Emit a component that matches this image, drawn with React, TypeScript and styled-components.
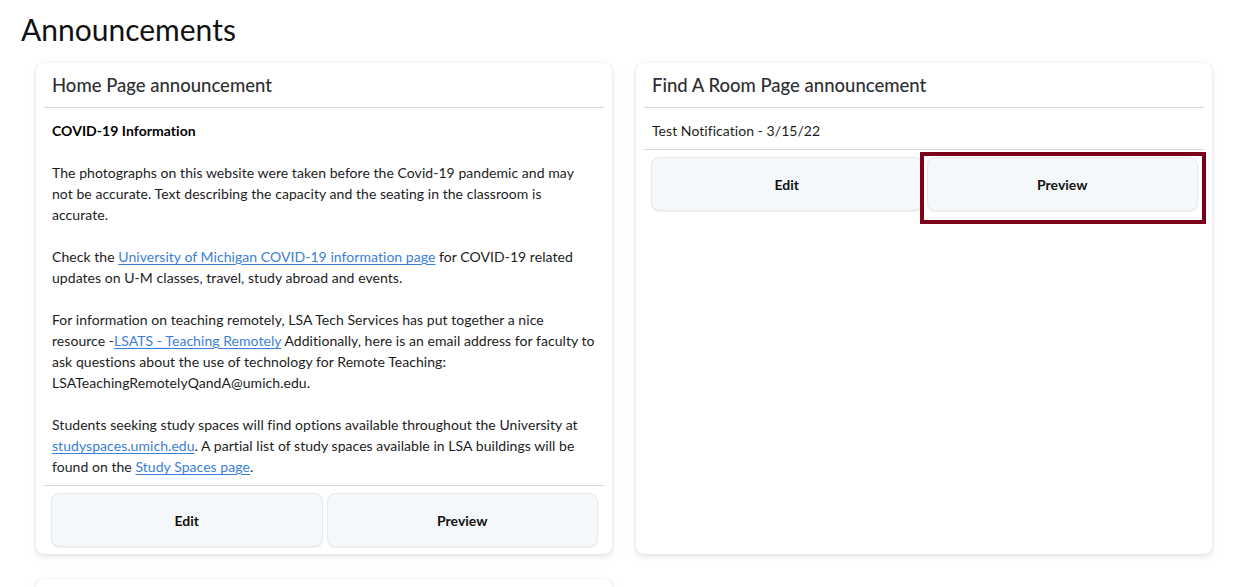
import React from "react";
import styled, { createGlobalStyle, css } from "styled-components";

const GlobalStyle = createGlobalStyle`
  html, body { margin: 0; padding: 0; background: #ffffff; }
  body {
    font-family: "Lato", "Liberation Sans", sans-serif;
    color: #1c1c1c;
    -webkit-font-smoothing: antialiased;
  }
`;

const Page = styled.main`
  padding: 0 20px 0 20px;
`;

const Title = styled.h1`
  margin: 11px 0 16px 1px;
  font-size: 30px;
  line-height: 36px;
  font-weight: 400;
  color: #111111;
`;

const CardGrid = styled.div`
  display: grid;
  grid-template-columns: 576px 576px;
  column-gap: 24px;
  row-gap: 25px;
  padding-left: 16px;
  align-items: stretch;
`;

const Card = styled.section<{ $empty?: boolean }>`
  display: flex;
  flex-direction: column;
  background: #ffffff;
  border-radius: 8px;
  box-shadow: 0 2px 6px rgba(0, 0, 0, 0.13), 0 0 2px rgba(0, 0, 0, 0.05);
  padding: 0 8px;
  ${(p) =>
    p.$empty &&
    css`
      min-height: 120px;
    `}
`;

const CardHeader = styled.h2`
  margin: 0;
  height: 44px;
  display: flex;
  align-items: center;
  padding: 0 8px;
  border-bottom: 1px solid #d3d9e0;
  font-size: 18.5px;
  font-weight: 500;
  color: #2f2f33;
`;

const CardBody = styled.div`
  padding: 12px 6px 8px 8px;
  font-size: 14px;
  line-height: 21px;
  letter-spacing: 0.05px;
  border-bottom: 1px solid #d3d9e0;
`;

const Heading = styled.p`
  margin: 0 0 21px;
  font-weight: 700;
  color: #000;
`;

const Para = styled.p`
  margin: 0 0 21px;
  &:last-child {
    margin-bottom: 0;
  }
`;

const Link = styled.a`
  color: #3b7ed8;
  text-decoration: underline;
  text-underline-offset: 2px;
`;

const ButtonRow = styled.div`
  display: grid;
  grid-template-columns: 1fr 1fr;
  column-gap: 4px;
  padding: 7px 6px 7px 7px;
`;

const ButtonSlot = styled.div<{ $highlight?: boolean }>`
  position: relative;
  display: flex;
  ${(p) =>
    p.$highlight &&
    css`
      &::after {
        content: "";
        position: absolute;
        left: -7px;
        right: -8px;
        top: -5px;
        bottom: -13px;
        border: 4px solid #7c0018;
        pointer-events: none;
      }
    `}
`;

const ActionButton = styled.button`
  flex: 1;
  height: 54px;
  background: #f5f8fb;
  border: 1px solid #e6eaef;
  border-radius: 8px;
  box-shadow: 0 1px 1px rgba(0, 0, 0, 0.06);
  font-family: "Lato", "Liberation Sans", sans-serif;
  font-size: 14px;
  font-weight: 700;
  color: #111111;
  cursor: pointer;
`;

function Actions({ highlightPreview }: { highlightPreview?: boolean }) {
  return (
    <ButtonRow>
      <ButtonSlot>
        <ActionButton>Edit</ActionButton>
      </ButtonSlot>
      <ButtonSlot $highlight={highlightPreview}>
        <ActionButton>Preview</ActionButton>
      </ButtonSlot>
    </ButtonRow>
  );
}

export default function App() {
  return (
    <>
      <GlobalStyle />
      <Page>
        <Title>Announcements</Title>
        <CardGrid>
          <Card>
            <CardHeader>Home Page announcement</CardHeader>
            <CardBody>
              <Heading>COVID-19 Information</Heading>
              <Para>
                The photographs on this website were taken before the Covid-19 pandemic and may
                <br />
                not be accurate. Text describing the capacity and the seating in the classroom is
                <br />
                accurate.
              </Para>
              <Para>
                Check the <Link href="#">University of Michigan COVID-19 information page</Link> for
                COVID-19 related
                <br />
                updates on U-M classes, travel, study abroad and events.
              </Para>
              <Para>
                For information on teaching remotely, LSA Tech Services has put together a nice
                <br />
                resource -<Link href="#">LSATS - Teaching Remotely</Link> Additionally, here is an
                email address for faculty to
                <br />
                ask questions about the use of technology for Remote Teaching:
                <br />
                LSATeachingRemotelyQandA@umich.edu.
              </Para>
              <Para>
                Students seeking study spaces will find options available throughout the University at
                <br />
                <Link href="#">studyspaces.umich.edu</Link>. A partial list of study spaces available in
                LSA buildings will be
                <br />
                found on the <Link href="#">Study Spaces page</Link>.
              </Para>
            </CardBody>
            <Actions />
          </Card>
          <Card>
            <CardHeader>Find A Room Page announcement</CardHeader>
            <CardBody>
              <Para>Test Notification - 3/15/22</Para>
            </CardBody>
            <Actions highlightPreview />
          </Card>
          <Card $empty />
        </CardGrid>
      </Page>
    </>
  );
}
